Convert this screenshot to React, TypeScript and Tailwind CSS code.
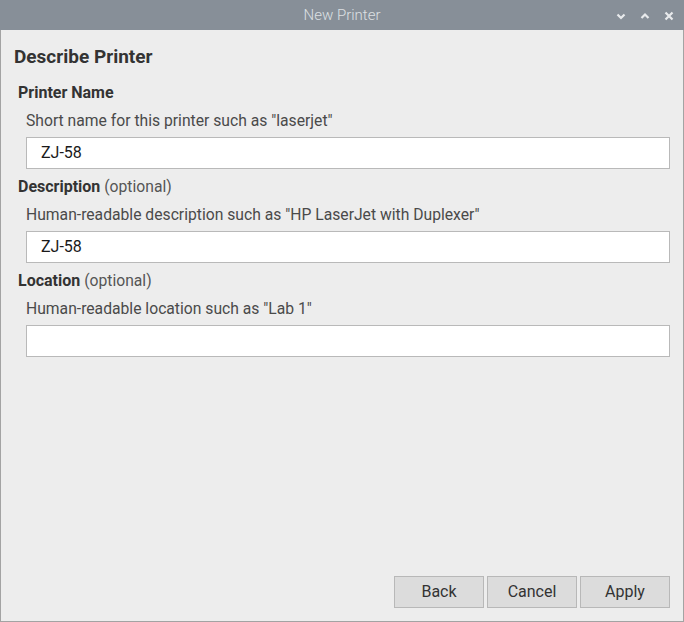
import React from "react";

function TitleIcon({ kind }: { kind: "min" | "max" | "close" }) {
    return (
        <svg width="12" height="12" viewBox="0 0 12 12" className="text-[#e8eaec]">
            {kind === "min" && <path d="M2.5 4.5 L6 8 L9.5 4.5" fill="none" stroke="currentColor" strokeWidth="2.2" />}
            {kind === "max" && <path d="M2.5 8 L6 4.5 L9.5 8" fill="none" stroke="currentColor" strokeWidth="2.2" />}
            {kind === "close" && <path d="M2.5 2.5 L9.5 9.5 M9.5 2.5 L2.5 9.5" fill="none" stroke="currentColor" strokeWidth="2.2" />}
        </svg>
    );
}

function Field({ label, optional, hint, value }: { label: string; optional?: boolean; hint: string; value: string }) {
    return (
        <div className="flex flex-col">
            <div className="pl-[17px] h-5 leading-5 text-[16px] text-[#333]">
                <span className="font-bold">{label}</span>
                {optional && <span className="text-[#555] text-[15.7px]"> (optional)</span>}
            </div>
            <div className="pl-[25px] mt-2 h-5 leading-5 text-[15.7px] text-[#4a4a4a]">{hint}</div>
            <div className="ml-[25px] mr-[13px] mt-[6px] h-8 bg-white border border-[#b9b9b9] flex items-center px-[14px] text-[16px] text-[#1a1a1a]">
                {value}
            </div>
        </div>
    );
}

export default function App() {
    return (
        <div className="w-[684px] h-[622px] flex flex-col bg-[#ededed] font-['Roboto',sans-serif] border-x border-b border-[#a3a3a3]">
            {/* Title bar */}
            <div className="h-[30px] bg-[#878f98] flex items-center relative -mx-px">
                <div className="flex-1 text-center text-[15px] font-light text-[#dde0e3]">New Printer</div>
                <div className="absolute right-[9px] top-[10px] flex gap-[12px]">
                    <TitleIcon kind="min" />
                    <TitleIcon kind="max" />
                    <TitleIcon kind="close" />
                </div>
            </div>

            <div className="flex-1 flex flex-col">
                <h1 className="mt-[15px] pl-[13px] h-6 leading-6 text-[19px] font-bold text-[#333]">Describe Printer</h1>

                <div className="mt-[14px] flex flex-col gap-[8px]">
                    <Field label="Printer Name" hint={'Short name for this printer such as "laserjet"'} value="ZJ-58" />
                    <Field label="Description" optional hint={'Human-readable description such as "HP LaserJet with Duplexer"'} value="ZJ-58" />
                    <Field label="Location" optional hint={'Human-readable location such as "Lab 1"'} value="" />
                </div>

                <div className="mt-auto mb-[13px] mr-[13px] flex justify-end gap-[3px]">
                    {["Back", "Cancel", "Apply"].map((b) => (
                        <button key={b} className="w-[90px] h-8 bg-[#dcdcdc] border border-[#b8b8b8] text-[16px] text-[#333]">
                            {b}
                        </button>
                    ))}
                </div>
            </div>
        </div>
    );
}
